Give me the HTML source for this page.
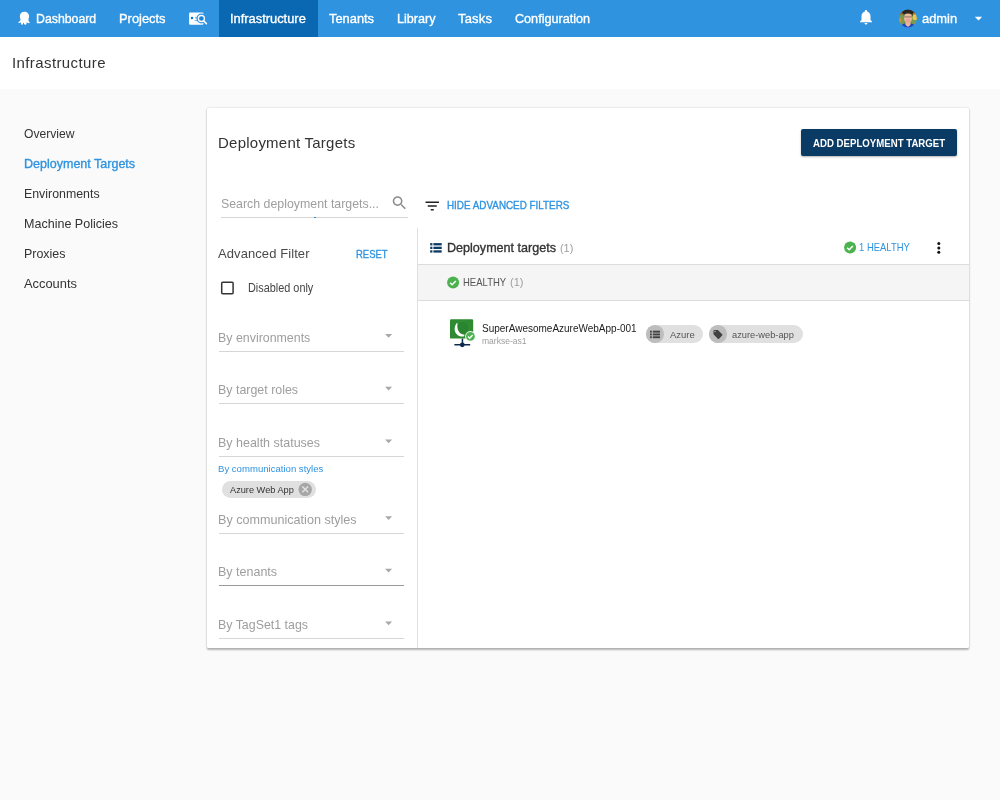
<!DOCTYPE html>
<html lang="en">
<head>
<meta charset="utf-8">
<title>Infrastructure - Deployment Targets</title>
<style>
*{box-sizing:border-box;margin:0;padding:0}
html,body{width:1000px;height:800px;overflow:hidden}
body{background:#fafafa;font-family:"Liberation Sans",sans-serif;color:#333;position:relative;font-size:13px}
.t{position:absolute;white-space:nowrap;transform-origin:0 0}
.md{-webkit-text-stroke:0.35px currentColor}
.a{position:absolute}
svg{position:absolute;overflow:visible}
#nav{left:0;top:0;width:1000px;height:37.4px;background:#2f93e0}
#navact{left:219px;top:0;width:99px;height:37.4px;background:#0a67b1}
#titlebar{left:0;top:37px;width:1000px;height:52px;background:#fff}
#card{left:207px;top:108px;width:762px;height:540px;background:#fff;border-radius:1.5px;box-shadow:0 1.5px 2px rgba(0,0,0,.27),0 0 2.5px rgba(0,0,0,.13)}
.ul{height:1px;background:#d6d6d6}
.chip{background:#e0e0e0;border-radius:9px;height:17.700px}
.chipav{background:#bdbdbd;border-radius:50%;width:17.700px;height:17.700px}
</style>
</head>
<body>
<div class="a" id="nav"></div>
<div class="a" id="navact"></div>
<div class="a" id="titlebar"></div>
<div class="a" id="card"></div>

<!-- add button -->
<div class="a" style="left:801px;top:129px;width:156px;height:27px;background:#0a3b65;border-radius:2px;box-shadow:0 1px 2px rgba(0,0,0,.3)"></div>

<!-- search underline -->
<div class="a ul" style="left:221px;top:217px;width:187px"></div>
<div class="a" style="left:314px;top:217px;width:2px;height:1px;background:#2f93e0"></div>

<!-- panel divider + list header lines -->
<div class="a" style="left:416.5px;top:228px;width:1.5px;height:420px;background:#e0e0e0"></div>
<div class="a" style="left:418px;top:264px;width:551px;height:37px;background:#f5f5f5;border-top:1px solid #dcdcdc;border-bottom:1px solid #dcdcdc"></div>

<!-- filter underlines -->
<div class="a ul" style="left:218.5px;top:350.5px;width:185.5px"></div>
<div class="a ul" style="left:218.5px;top:403.2px;width:185.5px"></div>
<div class="a ul" style="left:218.5px;top:455.9px;width:185.5px"></div>
<div class="a ul" style="left:218.5px;top:532.5px;width:185.5px"></div>
<div class="a ul" style="left:218.5px;top:585px;width:185.5px;background:#9a9a9a"></div>
<div class="a ul" style="left:218.5px;top:637.7px;width:185.5px"></div>

<!-- chips -->
<div class="a chip" style="left:646px;top:325.300px;width:57px"></div>
<div class="a chipav" style="left:646px;top:325.300px"></div>
<div class="a chip" style="left:709px;top:325.300px;width:94px"></div>
<div class="a chipav" style="left:709px;top:325.300px"></div>
<div class="a chip" style="left:221.700px;top:480.600px;width:94.500px;height:17.600px"></div>

<!-- icons -->
<svg width="1000" height="800" viewBox="0 0 1000 800" style="left:0;top:0">
<defs>
  <clipPath id="avc"><circle cx="907.9" cy="18.5" r="9"/></clipPath>
  <filter id="soft" x="-20%" y="-20%" width="140%" height="140%"><feGaussianBlur stdDeviation="0.45"/></filter>
  <path id="dd" d="M0 0h7l-3.5 3.75z"/>
  <g id="chk"><circle cx="0" cy="0" r="6" fill="#4bb24f"/><path d="M-3 0.2l2 2 3.8-3.9" fill="none" stroke="#fff" stroke-width="1.5"/></g>
</defs>

<!-- octopus -->
<path fill="#fff" d="M24.4 11.7C21.7 11.7 19.8 13.8 19.8 16.3C19.8 17.6 20.3 18.6 20.5 19.4C20.7 20.4 19.5 21.3 18 22.4C18.6 23.2 20 22.9 20.8 22.3C20.9 23.4 21 24.6 21.8 24.8C22.6 24.9 23 23.6 23.5 22.4C23.9 23.4 24.6 24.9 25.6 24.8C26.5 24.7 26.6 23.4 26.7 22.3C27.5 23.1 28.9 23.6 30 22.6C29.2 21.6 28.2 20.5 28.4 19.4C28.6 18.5 29.1 17.6 29.1 16.3C29.1 13.8 27.1 11.7 24.4 11.7Z"/>

<!-- project search icon -->
<rect x="189.1" y="12.5" width="14.4" height="12.3" rx="1.2" fill="#fff"/>
<circle cx="192" cy="18" r="1.25" fill="#0a74d6"/>
<rect x="195" y="16.9" width="2.2" height="1.6" fill="#8cc3ef"/>
<rect x="194.2" y="20" width="3.2" height="0.8" fill="#6fb2ea"/>
<circle cx="201.4" cy="18.5" r="4.9" fill="#2f93e0"/>
<path d="M203.6 20.8l3 3" stroke="#2f93e0" stroke-width="3.2" stroke-linecap="round"/>
<circle cx="201.4" cy="18.5" r="3" fill="#1b82db" stroke="#fff" stroke-width="1.3"/>
<path d="M203.6 20.8l2.8 2.8" stroke="#fff" stroke-width="1.5" stroke-linecap="round"/>

<!-- bell -->
<g transform="translate(857 8) scale(0.75)"><path fill="#fff" d="M12 22c1.1 0 2-.9 2-2h-4c0 1.1.89 2 2 2zm6-6v-5c0-3.07-1.64-5.64-4.5-6.32V4c0-.83-.67-1.5-1.5-1.5s-1.5.67-1.5 1.500v.68C7.630 5.360 6 7.920 6 11v5l-2 2v1h16v-1l-2-2z"/></g>

<!-- avatar -->
<g clip-path="url(#avc)"><g filter="url(#soft)">
  <rect x="897" y="8" width="22" height="22" fill="#7d9852"/>
  <rect x="897" y="8" width="22" height="5.800" fill="#35200f"/>
  <rect x="897" y="12.300" width="5.500" height="2.600" fill="#a8671e"/>
  <rect x="913" y="12.600" width="6" height="2.400" fill="#b8741f"/>
  <ellipse cx="915" cy="17.200" rx="2.500" ry="2.900" fill="#e6c94c"/>
  <ellipse cx="900.200" cy="20.500" rx="1.200" ry="2.600" fill="#c99a34"/>
  <path d="M899.500 31c0-5.600 3-7.700 8.500-7.700s8.500 2.100 8.500 7.700z" fill="#2341c6"/>
  <path d="M905.200 22.500h5.600l-.4 2.500-2.400 1.900-2.400-1.900z" fill="#eab69a"/>
  <ellipse cx="908" cy="18.200" rx="3.900" ry="5.100" fill="#ebb9a2"/>
  <ellipse cx="908" cy="20.800" rx="2.600" ry="2" fill="#e69c84" opacity=".7"/>
  <path d="M903.800 16.200c-.7-3.800 1.100-6.100 4.200-6.100s5.200 2.200 4.600 7c-.5-2.200-.9-3.200-1.700-3.900-1.800.5-4 .4-5.600 0-.8.600-1.200 1.500-1.500 3z" fill="#2a2522"/>
  <rect x="904.300" y="16.500" width="7.500" height=".9" fill="#6b5148" opacity=".75"/>
</g></g>

<!-- user caret -->
<path d="M974.800 16.800h7.400l-3.700 3.800z" fill="#fff"/>

<!-- search icon (18px @ 390.5,195.5) -->
<g transform="translate(390.5 193.900) scale(0.75)"><path fill="#8c8c8c" d="M15.500 14h-.79l-.28-.27C15.410 12.590 16 11.110 16 9.500 16 5.910 13.090 3 9.500 3S3 5.910 3 9.500 5.910 16 9.500 16c1.610 0 3.090-.59 4.230-1.570l.27.280v.79l5 4.990L20.490 19l-4.990-5zm-6 0C7.010 14 5 11.990 5 9.500S7.010 5 9.500 5 14 7.010 14 9.500 11.990 14 9.500 14z"/></g>

<!-- filter icon (18px @ 423.25,196.9) -->
<g transform="translate(423.250 196.900) scale(0.75)"><path fill="#222" d="M10 18h4v-2h-4v2zM3 6v2h18V6H3zm3 7h12v-2H6v2z"/></g>

<!-- list header icon -->
<g fill="#0a3b65">
  <rect x="430.200" y="243.100" width="2.200" height="2.300"/><rect x="433.400" y="243.100" width="8.300" height="2.300"/>
  <rect x="430.200" y="246.700" width="2.200" height="2.300"/><rect x="433.400" y="246.700" width="8.300" height="2.300"/>
  <rect x="430.200" y="250.300" width="2.200" height="2.300"/><rect x="433.400" y="250.300" width="8.300" height="2.300"/>
</g>

<!-- health summaries -->
<use href="#chk" x="850.100" y="247.600"/>
<use href="#chk" x="453.100" y="282.600"/>

<!-- kebab -->
<circle cx="938.800" cy="243.600" r="1.500" fill="#111"/><circle cx="938.800" cy="247.900" r="1.500" fill="#111"/><circle cx="938.800" cy="252.200" r="1.500" fill="#111"/>

<!-- checkbox -->
<rect x="221.700" y="282.300" width="11.400" height="11.400" rx="1" fill="none" stroke="#333" stroke-width="1.500"/>

<!-- dropdown arrows -->
<g fill="#a8a8a8">
  <use href="#dd" x="385.100" y="334.100"/>
  <use href="#dd" x="385.100" y="386.800"/>
  <use href="#dd" x="385.100" y="439.500"/>
  <use href="#dd" x="385.100" y="516.200"/>
  <use href="#dd" x="385.100" y="568.700"/>
  <use href="#dd" x="385.100" y="621.400"/>
</g>

<!-- filter chip delete -->
<circle cx="305.200" cy="489.400" r="6.700" fill="#a6a6a6"/>
<path d="M302.300 486.500l5.800 5.800m0-5.800l-5.800 5.800" stroke="#e0e0e0" stroke-width="1.500"/>

<!-- machine icon -->
<rect x="450" y="319.200" width="23.200" height="19.400" rx="1.200" fill="#2e8b32"/>
<circle cx="462.600" cy="327.800" r="6.600" fill="#2a8530" stroke="#3c9a42" stroke-width=".5"/>
<path d="M456.800 323C454 326.500 453.800 331.500 457 334.600C459 336.500 461.800 337 464.200 336.300L464.300 334.800C461.500 334.500 459.200 332.800 458.100 330.200C457.200 328 457.100 325.500 457.600 323.400Z" fill="#fff"/>
<rect x="461.700" y="338.600" width="1.500" height="5" fill="#0f2a4a"/>
<rect x="454.400" y="344" width="15.800" height="1.500" fill="#0f2a4a"/>
<circle cx="462.300" cy="344.800" r="2.400" fill="#0f2a4a"/>
<circle cx="470.400" cy="336.400" r="5.300" fill="#fff"/>
<circle cx="470.400" cy="336.400" r="4.400" fill="#4bb24f"/>
<path d="M468 336.500l1.700 1.700 3-3.200" fill="none" stroke="#fff" stroke-width="1.400"/>

<!-- chip icons -->
<g fill="#424242">
  <rect x="650" y="330.700" width="1.800" height="1.900"/><rect x="652.800" y="330.700" width="7.200" height="1.900"/>
  <rect x="650" y="333.500" width="1.800" height="1.900"/><rect x="652.800" y="333.500" width="7.200" height="1.900"/>
  <rect x="650" y="336.300" width="1.800" height="1.900"/><rect x="652.800" y="336.300" width="7.200" height="1.900"/>
</g>
<g transform="translate(712.550 329) scale(0.45)"><path fill="#424242" d="M21.410 11.580l-9-9C12.050 2.220 11.550 2 11 2H4c-1.100 0-2 .9-2 2v7c0 .55.220 1.050.59 1.420l9 9c.36.360.86.580 1.410.580.550 0 1.050-.22 1.410-.59l7-7c.37-.36.590-.86.590-1.410 0-.55-.23-1.060-.59-1.420zM5.500 7C4.670 7 4 6.330 4 5.500S4.670 4 5.500 4 7 4.670 7 5.500 6.330 7 5.500 7z"/></g>
</svg>

<!-- text -->
<div class="t md" style="left:35.51px;top:12px;font-size:13px;line-height:13px;color:#fff;transform:scaleX(0.9468)">Dashboard</div>
<div class="t md" style="left:118.98px;top:12px;font-size:13px;line-height:13px;color:#fff;transform:scaleX(0.9910)">Projects</div>
<div class="t md" style="left:230.48px;top:12px;font-size:13px;line-height:13px;color:#fff;transform:scaleX(0.9896)">Infrastructure</div>
<div class="t md" style="left:329.13px;top:12px;font-size:13px;line-height:13px;color:#fff;transform:scaleX(0.9889)">Tenants</div>
<div class="t md" style="left:397.24px;top:12px;font-size:13px;line-height:13px;color:#fff;transform:scaleX(0.9688)">Library</div>
<div class="t md" style="left:458.12px;top:12px;font-size:13px;line-height:13px;color:#fff;letter-spacing:0.181px;transform:scaleX(0.999)">Tasks</div>
<div class="t md" style="left:514.84px;top:12px;font-size:13px;line-height:13px;color:#fff;transform:scaleX(0.9701)">Configuration</div>
<div class="t md" style="left:922.13px;top:12px;font-size:13px;line-height:13px;color:#fff;transform:scaleX(0.9923)">admin</div>
<div class="t" style="left:11.60px;top:55px;font-size:15px;line-height:15px;color:#333;letter-spacing:0.402px;transform:scaleX(0.999)">Infrastructure</div>
<div class="t" style="left:23.67px;top:127px;font-size:13px;line-height:13px;color:#333;transform:scaleX(0.9330)">Overview</div>
<div class="t md" style="left:23.65px;top:157px;font-size:13px;line-height:13px;color:#2f93e0;transform:scaleX(0.9630)">Deployment Targets</div>
<div class="t" style="left:23.66px;top:187px;font-size:13px;line-height:13px;color:#333;transform:scaleX(0.9509)">Environments</div>
<div class="t" style="left:23.65px;top:217px;font-size:13px;line-height:13px;color:#333;transform:scaleX(0.9637)">Machine Policies</div>
<div class="t" style="left:23.65px;top:247px;font-size:13px;line-height:13px;color:#333;transform:scaleX(0.9570)">Proxies</div>
<div class="t" style="left:23.63px;top:277px;font-size:13px;line-height:13px;color:#333;transform:scaleX(0.9899)">Accounts</div>
<div class="t" style="left:217.90px;top:135px;font-size:15px;line-height:15px;color:#333;letter-spacing:0.246px;transform:scaleX(0.999)">Deployment Targets</div>
<div class="t" style="left:812.82px;top:138px;font-size:11px;line-height:11px;color:#fff;transform:scaleX(0.8767);font-weight:bold">ADD DEPLOYMENT TARGET</div>
<div class="t" style="left:220.76px;top:197px;font-size:13px;line-height:13px;color:#9e9e9e;transform:scaleX(0.9505)">Search deployment targets...</div>
<div class="t md" style="left:446.51px;top:200px;font-size:11px;line-height:11px;color:#2f93e0;transform:scaleX(0.8965)">HIDE ADVANCED FILTERS</div>
<div class="t" style="left:218.02px;top:247px;font-size:13px;line-height:13px;color:#4a4a4a;letter-spacing:0.088px;transform:scaleX(0.999)">Advanced Filter</div>
<div class="t md" style="left:355.83px;top:249px;font-size:11px;line-height:11px;color:#2f93e0;transform:scaleX(0.8595)">RESET</div>
<div class="t" style="left:247.75px;top:282px;font-size:12px;line-height:12px;color:#444;transform:scaleX(0.9064)">Disabled only</div>
<div class="t md" style="left:446.85px;top:241px;font-size:13px;line-height:13px;color:#333;transform:scaleX(0.9669)">Deployment targets</div>
<div class="t" style="left:559.75px;top:243px;font-size:11px;line-height:11px;color:#9e9e9e;transform:scaleX(0.9890)">(1)</div>
<div class="t" style="left:463.23px;top:277px;font-size:11px;line-height:11px;color:#555;transform:scaleX(0.8642)">HEALTHY</div>
<div class="t" style="left:510.34px;top:277px;font-size:11px;line-height:11px;color:#9e9e9e;letter-spacing:0.033px;transform:scaleX(0.999)">(1)</div>
<div class="t" style="left:859.23px;top:242px;font-size:11px;line-height:11px;color:#2f93e0;transform:scaleX(0.8603)">1 HEALTHY</div>
<div class="t" style="left:481.50px;top:324px;font-size:10px;line-height:10px;color:#1c1c1c;letter-spacing:0.003px;transform:scaleX(0.999)">SuperAwesomeAzureWebApp-001</div>
<div class="t" style="left:481.59px;top:337px;font-size:9px;line-height:9px;color:#9e9e9e;transform:scaleX(0.9492)">markse-as1</div>
<div class="t" style="left:669.73px;top:330px;font-size:9.5px;line-height:9.5px;color:#555;letter-spacing:0.003px;transform:scaleX(0.999)">Azure</div>
<div class="t" style="left:732.14px;top:330px;font-size:9.5px;line-height:9.5px;color:#555;transform:scaleX(0.9769)">azure-web-app</div>
<div class="t" style="left:217.66px;top:331px;font-size:13px;line-height:13px;color:#9e9e9e;transform:scaleX(0.9531)">By environments</div>
<div class="t" style="left:217.65px;top:383px;font-size:13px;line-height:13px;color:#9e9e9e;transform:scaleX(0.9554)">By target roles</div>
<div class="t" style="left:217.65px;top:436px;font-size:13px;line-height:13px;color:#9e9e9e;transform:scaleX(0.9601)">By health statuses</div>
<div class="t" style="left:217.83px;top:464px;font-size:9.75px;line-height:9.75px;color:#2f93e0;transform:scaleX(0.9818)">By communication styles</div>
<div class="t" style="left:229.85px;top:485px;font-size:9.5px;line-height:9.5px;color:#333;transform:scaleX(0.9690)">Azure Web App</div>
<div class="t" style="left:217.64px;top:513px;font-size:13px;line-height:13px;color:#9e9e9e;transform:scaleX(0.9689)">By communication styles</div>
<div class="t" style="left:217.65px;top:565px;font-size:13px;line-height:13px;color:#9e9e9e;transform:scaleX(0.9620)">By tenants</div>
<div class="t" style="left:217.66px;top:618px;font-size:13px;line-height:13px;color:#9e9e9e;transform:scaleX(0.9529)">By TagSet1 tags</div>
</body>
</html>
